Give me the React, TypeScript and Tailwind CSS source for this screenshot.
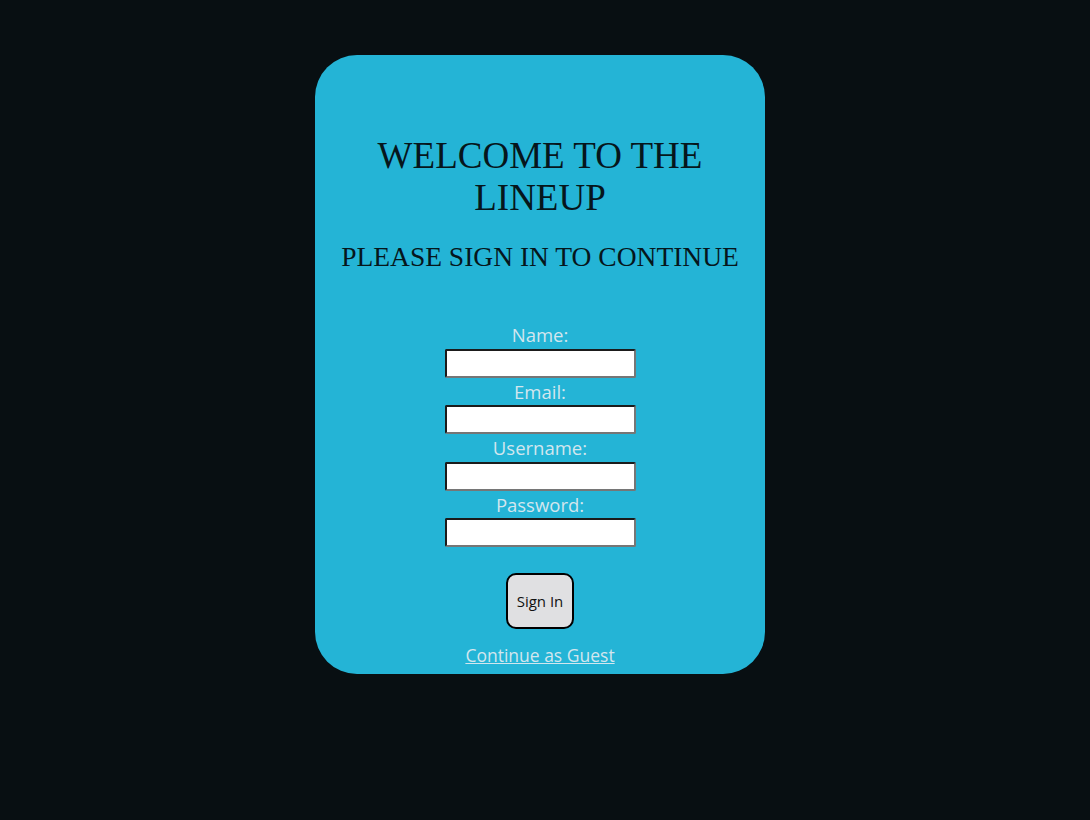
import React from "react";

export default function App() {
  const fields = ["Name:", "Email:", "Username:", "Password:"];
  return (
    <div className="min-h-[820px] w-full bg-[#080f12] flex justify-center pt-[55px] pr-[10px]">
      <div className="w-[450px] h-[619px] bg-[#24b4d6] rounded-[42px] flex flex-col items-center">
        <h1
          className="mt-[80px] text-[37px] leading-[42px] text-[#06161c] text-center px-[35px]"
          style={{ fontFamily: '"Liberation Serif", serif' }}
        >
          WELCOME TO THE LINEUP
        </h1>
        <h2
          className="mt-[21px] text-[27.5px] leading-[34px] text-[#06161c] text-center"
          style={{ fontFamily: '"Liberation Serif", serif' }}
        >
          PLEASE SIGN IN TO CONTINUE
        </h2>
        <form
          className="mt-[47px] flex flex-col items-center"
          style={{ fontFamily: '"Open Sans", sans-serif' }}
          onSubmit={(e) => e.preventDefault()}
        >
          {fields.map((f) => (
            <div key={f} className="flex flex-col items-center">
              <label className="text-[18.5px] leading-[27.5px] text-[#d3e6ee]">{f}</label>
              <input
                type={f === "Password:" ? "password" : "text"}
                className="w-[191px] h-[29px] bg-white rounded-[2px] border-2 border-t-[#1b1b1b] border-l-[#1b1b1b] border-r-[#767676] border-b-[#767676] outline-none"
              />
            </div>
          ))}
          <button
            type="submit"
            className="mt-[26px] w-[68px] h-[56px] bg-[#e0e0e2] border-2 border-black rounded-[10px] text-[15px] text-[#111]"
          >
            Sign In
          </button>
          <a
            href="#"
            className="mt-[14px] text-[17.5px] leading-[24px] text-[#d3e6ee] underline"
          >
            Continue as Guest
          </a>
        </form>
      </div>
    </div>
  );
}
